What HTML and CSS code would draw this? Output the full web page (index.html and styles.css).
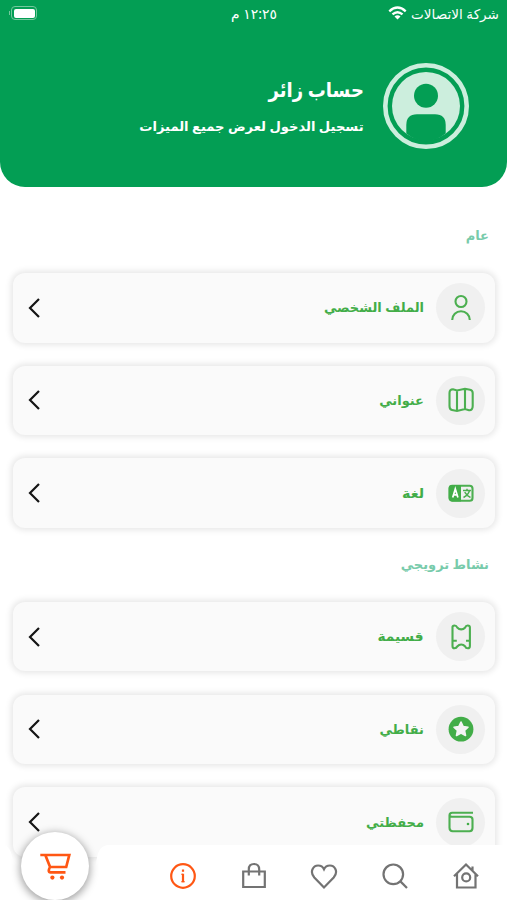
FILE: index.html
```html
<!DOCTYPE html>
<html lang="ar" dir="rtl">
<head>
<meta charset="utf-8">
<title>حساب زائر</title>
<link rel="stylesheet" href="styles.css">
</head>
<body>
<div class="screen">
  <header class="header">
    <div class="status">
      <div class="carrier"><span class="t carrier-text">شركة الاتصالات</span>
        <svg class="wifi" viewBox="0 0 20 15"><g fill="none" stroke="#fff" stroke-width="2.5"><path d="M1.2 5.8Q10-2.4 18.8 5.8"/><path d="M4.6 9.1Q10 4.3 15.4 9.1"/></g><path d="M6.8 11.2Q10 8.5 13.2 11.2L10 14.4Z" fill="#fff"/></svg>
      </div>
      <span class="t clock">١٢:٢٥ م</span>
      <div class="battery"><i class="charge"></i></div>
    </div>
    <div class="profile">
      <svg class="avatar" viewBox="0 0 86 86"><circle cx="43" cy="43" r="40.7" fill="none" stroke="#cceedd" stroke-width="4.6"/><circle cx="43" cy="43" r="34" fill="#cceedd"/><circle cx="43" cy="32.7" r="12" fill="#039e54"/><path d="M23.3 70.5V62Q23.3 51.3 34 51.3H52Q62.7 51.3 62.7 62V70.5Q43 86 23.3 70.5Z" fill="#039e54"/></svg>
      <div class="who"><h1 class="t name">حساب زائر</h1><p class="t hint">تسجيل الدخول لعرض جميع الميزات</p></div>
    </div>
  </header>
  <main class="content">
    <h2 class="section"><span class="t s1">عام</span></h2>
    <div class="list">
      <div class="card"><div class="bubble"><svg viewBox="0 0 28 28"><circle cx="14" cy="7.5" r="5.5"/><path d="M5.2 26a8.8 8.8 0 0 1 17.6 0"/></svg></div><span class="t label">الملف الشخصي</span><svg class="chev" viewBox="0 0 12 20"><path d="M11 1L2 10L11 19"/></svg></div>
      <div class="card"><div class="bubble"><svg viewBox="0 0 28 28"><path d="M2.5 7Q2.5 3.2 6 3.2L10 4.5L18 2.8L23 3.8Q25.7 4.4 25.7 7V20Q25.7 24.5 22 24.2L18 23L10 25L5 24Q2.5 23.5 2.5 20ZM10 4.5V25M18 2.8V23"/></svg></div><span class="t label">عنواني</span><svg class="chev" viewBox="0 0 12 20"><path d="M11 1L2 10L11 19"/></svg></div>
      <div class="card"><div class="bubble"><svg viewBox="0 0 28 28"><rect x="2.5" y="6.7" width="23" height="15" rx="2.8"/><path class="solid" d="M1.8 9Q1.8 6 5 6H14V22.4H5Q1.8 22.4 1.8 19Z"/><path class="white" d="M5.7 18.5L8.3 10L10.9 18.5M6.6 15.8H10"/><path class="thin" d="M16 11.5H24M20 9.8V11.5M22.5 11.8Q21 16.2 16.5 18.5M17.7 13.2Q20 17 23.5 18.5"/></svg></div><span class="t label wide">لغة</span><svg class="chev" viewBox="0 0 12 20"><path d="M11 1L2 10L11 19"/></svg></div>
    </div>
    <h2 class="section second"><span class="t s2">نشاط ترويجي</span></h2>
    <div class="list">
      <div class="card"><div class="bubble"><svg viewBox="0 0 28 28"><path d="M5.5 4Q5.5 2.5 7.5 2.5Q9.5 2.5 10.2 4.5Q12 6.4 14.2 6.4Q16.5 6.4 18.2 4.5Q18.8 2.5 20.7 2.5Q22.9 2.5 22.9 4.5V23Q22.9 25.3 20.7 25.3Q18.8 25.3 18.2 23.5Q16.5 21.5 14.2 21.5Q12 21.5 10.2 23.5Q9.5 25.3 7.5 25.3Q5.5 25.3 5.5 23ZM6 17.8H9.8M19 17.8H22.7"/></svg></div><span class="t label wide-2">قسيمة</span><svg class="chev" viewBox="0 0 12 20"><path d="M11 1L2 10L11 19"/></svg></div>
      <div class="card"><div class="bubble"><svg viewBox="0 0 28 28"><circle class="solid" cx="14" cy="14.2" r="12.4"/><path class="star" d="M14 7L16.2 11.6L21 12.2L17.5 15.5L18.5 20.5L14 18L9.5 20.5L10.5 15.5L7 12.2L11.8 11.6Z"/></svg></div><span class="t label">نقاطي</span><svg class="chev" viewBox="0 0 12 20"><path d="M11 1L2 10L11 19"/></svg></div>
      <div class="card"><div class="bubble"><svg viewBox="0 0 28 28"><path d="M26 4.8H5.2Q2.5 4.8 2.5 7.5V19.8Q2.5 23.2 5.7 23.2H22.5Q25.5 23.2 25.5 20V11.5Q25.5 8.8 22.5 8.8H5.2Q2.5 8.8 2.5 7"/><circle class="solid" cx="21" cy="16" r="1.3"/></svg></div><span class="t label">محفظتي</span><svg class="chev" viewBox="0 0 12 20"><path d="M11 1L2 10L11 19"/></svg></div>
    </div>
  </main>
  <nav class="nav">
    <svg class="nav-bg" viewBox="0 0 507 56"><path d="M0 1H3Q12 2 13 21A41.5 41.5 0 0 0 96 21Q97 1.5 108 1H507V56H0Z" fill="#fff"/></svg>
    <div class="tabs">
      <svg viewBox="0 0 28 28"><path d="M2 14.2L14 2.5L26 14.2M5 12V25.5H23.5V12M20.5 8.5V4.5"/><circle cx="14.2" cy="15.4" r="4"/></svg>
      <svg viewBox="0 0 28 28"><circle cx="12.3" cy="12.3" r="9.8"/><path d="M19.4 19.4L26 26"/></svg>
      <svg viewBox="0 0 28 28"><path d="M14 25.4L4.3 15.5C-.8 9.4 3.4 3.5 8.1 3.5C11 3.5 13 5 14 7.2C15 5 17 3.5 19.9 3.5C24.6 3.5 28.8 9.4 23.7 15.5Z"/></svg>
      <svg viewBox="0 0 28 28"><path d="M3.2 9.5H24.8V25H3.2ZM8.8 13.5V7.5Q8.8 2 14 2Q19.2 2 19.2 7.5V13.5"/></svg>
      <svg class="active" viewBox="0 0 28 28"><circle cx="14" cy="14" r="11.8"/><path d="M14 11.8V20.2M14 7.6V9.8"/><path class="serif" d="M12.2 12.3H14M12.2 19.7H15.8"/></svg>
    </div>
    <div class="cart"><svg viewBox="0 0 32 30"><path d="M1.3 4H30.3L27.2 16H11M6.3 4L11.5 17M11 16Q8.3 21.3 11.5 21.3H26.5"/><circle cx="13.4" cy="26.6" r="2.1"/><circle cx="23" cy="26.6" r="2.1"/></svg></div>
  </nav>
</div>
</body>
</html>
```
FILE: styles.css
```css
*{box-sizing:border-box}
html,body{margin:0;height:900px;overflow:hidden;background:#fff}
body{font-family:"Noto Sans","DejaVu Sans",sans-serif}
svg{display:block}
.screen{position:relative;width:507px;height:900px;overflow:hidden}
.header{height:186.5px;background:#039e54;border-radius:0 0 25px 25px;color:#fff}
.status{height:26px;display:grid;grid-template-columns:1fr 60px 1fr;align-items:center;padding:0 8px 0 9px}
.carrier{display:flex;align-items:center;gap:4px}
.wifi{width:19px;height:14px}
.t{display:inline-block;white-space:nowrap;margin:0;transform-origin:right center}
.carrier-text{font-size:13.6px}
.clock{font-size:13.9px;text-align:center}
.battery{position:relative;justify-self:end;width:26px;height:14px;margin-left:2px;border:1px solid #74c89d;border-radius:4px;padding:1.5px}
.battery::before{content:"";position:absolute;left:-3px;top:4px;width:1px;height:4px;background:#74c89d}
.charge{display:block;height:9px;background:#fff;border-radius:2px}
.profile{display:flex;gap:19px;padding:37px 38px 0 0}
.avatar{width:86px;height:86px}
.who{padding-top:13px;display:flex;flex-direction:column;align-items:flex-start}
.name{font-size:20px;line-height:28px;font-weight:700;transform:scaleX(.9)}
.hint{font-size:13px;line-height:20px;font-weight:700;margin-top:12px;transform:scaleX(1.008)}
.section{margin:0;height:86.5px;padding:35px 18px 0 0;font-size:13px;line-height:26px;font-weight:700;color:#78cbab}
.second{height:74px;padding-top:23px}
.list{padding:0 12px 0 13px;display:grid;gap:23.2px}
.card{height:69.5px;border-radius:12px;background:#fafafa;box-shadow:0 0 6px 2px rgba(0,0,0,.1);display:flex;align-items:center;padding:0 10px 0 15px}
.bubble{width:49px;height:49px;border-radius:50%;background:#f0f0f0;display:grid;place-items:center;margin-left:12px}
.bubble svg{width:28px;height:28px;fill:none;stroke:#4caf50;stroke-width:2.1}
.bubble .solid{fill:#42ad48;stroke:none}
.bubble .white{stroke:#fff;stroke-width:1.7}
.bubble .thin{stroke-width:1.5}
.bubble .star{fill:#f4f4f4;stroke:#f4f4f4;stroke-width:1.6;stroke-linejoin:round}
.label{font-size:13px;font-weight:700;color:#42ad48;line-height:24px;margin-top:-1px}
.wide{transform:scaleX(1.1)}
.wide-2{transform:scaleX(1.06)}
.chev{width:12px;height:20px;margin-right:auto;fill:none;stroke:#151515;stroke-width:2.2}
.nav{position:absolute;left:0;bottom:0;width:507px;height:56px}
.nav-bg{width:507px;height:56px}
.tabs{position:absolute;inset:0 27.5px 0 169px;display:flex;justify-content:space-between;align-items:center;padding-top:7px}
.tabs svg{width:28px;height:28px;fill:none;stroke:#737373;stroke-width:2.2}
.tabs .active{stroke:#ff5714}
.tabs .serif{stroke-width:1.1}
.cart{position:absolute;left:20.5px;top:-12.5px;width:68px;height:68px;border-radius:50%;background:#fff;box-shadow:0 2px 8px 1px rgba(0,0,0,.38);display:grid;place-items:center}
.cart svg{width:32px;height:30px;fill:none;stroke:#ff5714;stroke-width:2.7}
.cart circle{fill:#ff5714;stroke:none}
```
